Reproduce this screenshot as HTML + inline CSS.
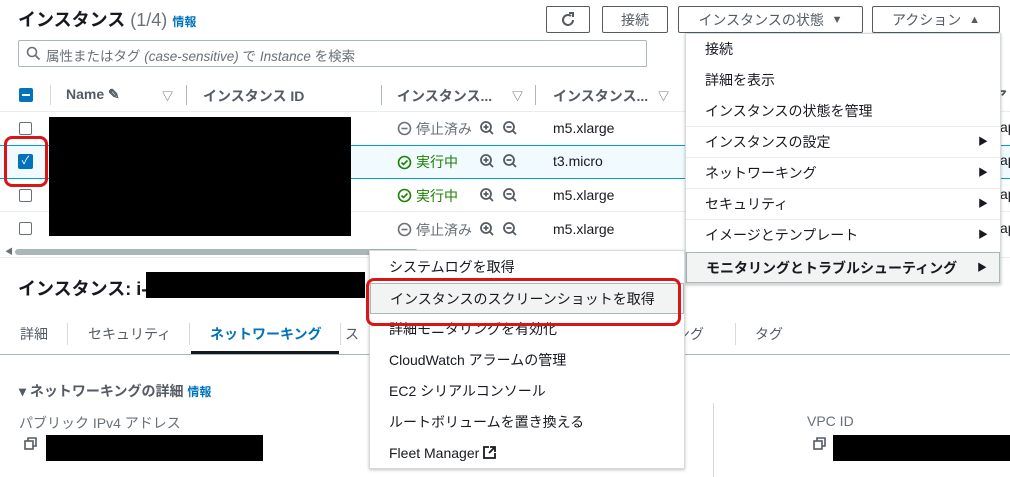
<!DOCTYPE html>
<html><head><meta charset="utf-8"><style>
*{box-sizing:border-box;margin:0;padding:0}
body{width:1010px;height:477px;overflow:hidden;background:#fff;font-family:"Liberation Sans","Noto Sans CJK JP",sans-serif;font-size:14px;color:#16191f;position:relative}
.a{position:absolute;white-space:nowrap}
.btn{position:absolute;border:1px solid #545b64;border-radius:2px;background:#fff;font-size:14px;color:#545b64;display:flex;align-items:center;justify-content:center;top:6px;height:27px}
.cb{position:absolute;width:13px;height:13px;border:1px solid #687078;border-radius:2px;background:#fff}
.sep{position:absolute;width:1px;background:#d5dbdb}
.menu{position:absolute;background:#fff;border:1px solid #d5dbdb;box-shadow:0 1px 3px rgba(0,0,0,.25)}
.mi{position:absolute;left:0;right:0;height:31px;padding-left:19px;line-height:31px;color:#16191f;font-size:14px}
.tri{position:absolute;right:12px;top:0;font-size:10px;color:#16191f}
.stop{color:#687078}.run{color:#1d8102}
.blk{position:absolute;background:#000}
.red{position:absolute;border:3px solid #d91515;border-radius:8px}
.ic{position:absolute}
</style></head><body>
<div class="a" style="left:18px;top:6px;font-size:18px;font-weight:bold">インスタンス <span style="font-weight:normal;color:#687078">(1/4)</span> <span style="font-size:12px;color:#0073bb;font-weight:bold">情報</span></div>
<div class="btn" style="left:546px;width:44px"><svg width="16" height="16" viewBox="0 0 16 16"><path d="M13 8a5 5 0 1 1-2-4" fill="none" stroke="#545b64" stroke-width="2"/><path d="M9 1h4v4" fill="none" stroke="#545b64" stroke-width="2"/></svg></div>
<div class="btn" style="left:602px;width:66px">接続</div>
<div class="btn" style="left:678px;width:185px">インスタンスの状態 &nbsp;<span style="font-size:11px">▼</span></div>
<div class="btn" style="left:872px;width:128px">アクション &nbsp;<span style="font-size:11px">▲</span></div>
<div class="a" style="left:18px;top:40px;width:629px;height:27px;border:1px solid #aab7b8;border-radius:2px"></div>
<svg class="a" style="left:26px;top:46px" width="15" height="15" viewBox="0 0 15 15"><circle cx="6" cy="6" r="4.5" fill="none" stroke="#687078" stroke-width="1.6"/><path d="M9.5 9.5l4 4" stroke="#687078" stroke-width="1.8"/></svg>
<div class="a" style="left:46px;top:45px;color:#687078;font-size:13.5px">属性またはタグ <i>(case-sensitive)</i> で <i>Instance</i> を検索</div>
<div class="a" style="left:0;top:79px;width:1010px;height:33px;border-bottom:1px solid #eaeded"></div>
<div class="a" style="left:19px;top:88px;width:14px;height:14px;background:#0073bb;border-radius:2px"><div style="position:absolute;left:3px;top:6px;width:8px;height:2px;background:#fff"></div></div>
<div class="sep" style="left:50px;top:85px;height:20px"></div>
<div class="a" style="left:66px;top:86px;font-weight:bold;color:#545b64">Name ✎</div>
<div class="a" style="left:162px;top:88px;font-size:11px;color:#545b64">▽</div>
<div class="sep" style="left:186px;top:85px;height:20px;background:#aab7b8"></div>
<div class="a" style="left:203px;top:86px;font-weight:bold;color:#545b64">インスタンス ID</div>
<div class="sep" style="left:381px;top:85px;height:20px;background:#aab7b8"></div>
<div class="a" style="left:397px;top:86px;font-weight:bold;color:#545b64">インスタンス...</div>
<div class="a" style="left:512px;top:88px;font-size:11px;color:#545b64">▽</div>
<div class="sep" style="left:535px;top:85px;height:20px;background:#aab7b8"></div>
<div class="a" style="left:553px;top:86px;font-weight:bold;color:#545b64">インスタンス...</div>
<div class="a" style="left:658px;top:88px;font-size:11px;color:#545b64">▽</div>
<div class="a" style="left:993px;top:86px;font-weight:bold;color:#545b64">ア</div>
<!-- rows -->
<div class="a" style="left:0;top:145px;width:1010px;height:34px;background:#f1faff;border-top:1px solid #00a1c9;border-bottom:1px solid #00a1c9"></div>
<div class="a" style="left:0;top:211px;width:1010px;height:1px;background:#eaeded"></div>
<div class="cb" style="left:19px;top:122px"></div>
<div class="a" style="left:18px;top:154px;width:15px;height:15px;background:#0073bb;border-radius:2px;color:#fff;font-size:11px;text-align:center;line-height:15px">✓</div>
<div class="cb" style="left:19px;top:189px"></div>
<div class="cb" style="left:19px;top:222px"></div>

<svg class="ic" style="left:397px;top:121px" width="15" height="15" viewBox="0 0 15 15"><circle cx="7.5" cy="7.5" r="6" fill="none" stroke="#687078" stroke-width="1.6"/><path d="M4.5 7.5h6" stroke="#687078" stroke-width="1.6"/></svg>
<svg class="ic" style="left:397px;top:155px" width="15" height="15" viewBox="0 0 15 15"><circle cx="7.5" cy="7.5" r="6" fill="none" stroke="#1d8102" stroke-width="1.6"/><path d="M4.5 7.5l2 2 4-4" fill="none" stroke="#1d8102" stroke-width="1.6"/></svg>
<svg class="ic" style="left:397px;top:188px" width="15" height="15" viewBox="0 0 15 15"><circle cx="7.5" cy="7.5" r="6" fill="none" stroke="#1d8102" stroke-width="1.6"/><path d="M4.5 7.5l2 2 4-4" fill="none" stroke="#1d8102" stroke-width="1.6"/></svg>
<svg class="ic" style="left:397px;top:222px" width="15" height="15" viewBox="0 0 15 15"><circle cx="7.5" cy="7.5" r="6" fill="none" stroke="#687078" stroke-width="1.6"/><path d="M4.5 7.5h6" stroke="#687078" stroke-width="1.6"/></svg>
<div class="a stop" style="left:416px;top:119px">停止済み</div>
<div class="a run" style="left:416px;top:152px">実行中</div>
<div class="a run" style="left:416px;top:186px">実行中</div>
<div class="a stop" style="left:416px;top:220px">停止済み</div>
<svg class="ic" style="left:479px;top:120px" width="40" height="16" viewBox="0 0 40 16"><g fill="none" stroke="#545b64" stroke-width="1.8"><circle cx="7" cy="7" r="5"/><path d="M10.5 10.5l3.5 3.5M4.5 7h5M7 4.5v5"/><circle cx="30" cy="7" r="5"/><path d="M33.5 10.5l3.5 3.5M27.5 7h5"/></g></svg>
<svg class="ic" style="left:479px;top:153px" width="40" height="16" viewBox="0 0 40 16"><g fill="none" stroke="#545b64" stroke-width="1.8"><circle cx="7" cy="7" r="5"/><path d="M10.5 10.5l3.5 3.5M4.5 7h5M7 4.5v5"/><circle cx="30" cy="7" r="5"/><path d="M33.5 10.5l3.5 3.5M27.5 7h5"/></g></svg>
<svg class="ic" style="left:479px;top:187px" width="40" height="16" viewBox="0 0 40 16"><g fill="none" stroke="#545b64" stroke-width="1.8"><circle cx="7" cy="7" r="5"/><path d="M10.5 10.5l3.5 3.5M4.5 7h5M7 4.5v5"/><circle cx="30" cy="7" r="5"/><path d="M33.5 10.5l3.5 3.5M27.5 7h5"/></g></svg>
<svg class="ic" style="left:479px;top:221px" width="40" height="16" viewBox="0 0 40 16"><g fill="none" stroke="#545b64" stroke-width="1.8"><circle cx="7" cy="7" r="5"/><path d="M10.5 10.5l3.5 3.5M4.5 7h5M7 4.5v5"/><circle cx="30" cy="7" r="5"/><path d="M33.5 10.5l3.5 3.5M27.5 7h5"/></g></svg>
<div class="a" style="left:553px;top:120px">m5.xlarge</div>
<div class="a" style="left:553px;top:153px">t3.micro</div>
<div class="a" style="left:553px;top:187px">m5.xlarge</div>
<div class="a" style="left:553px;top:221px">m5.xlarge</div>
<div class="a" style="left:1000px;top:119px">ap</div><div class="a" style="left:1000px;top:152px">ap</div><div class="a" style="left:1000px;top:186px">ap</div><div class="a" style="left:1000px;top:220px">ap</div>
<div class="blk" style="left:49px;top:117px;width:302px;height:119px"></div>
<div class="a" style="left:5px;top:246px;font-size:8px;color:#687078">◀</div>
<div class="a" style="left:15px;top:249px;width:403px;height:6px;background:#aab7b8;border-radius:3px"></div>
<div class="a" style="left:0;top:257px;width:1010px;height:1px;background:#eaeded"></div>
<!-- bottom panel -->
<div class="a" style="left:18px;top:275px;font-size:18px;font-weight:bold">インスタンス: i-</div>
<div class="blk" style="left:146px;top:272px;width:219px;height:26px"></div>
<div class="a" style="left:20px;top:324px;color:#545b64">詳細</div>
<div class="sep" style="left:67px;top:323px;height:22px"></div>
<div class="a" style="left:88px;top:324px;color:#545b64">セキュリティ</div>
<div class="sep" style="left:189px;top:323px;height:22px"></div>
<div class="a" style="left:210px;top:324px;color:#0073bb;font-weight:bold">ネットワーキング</div>
<div class="a" style="left:191px;top:351px;width:148px;height:3px;background:#16191f"></div>
<div class="sep" style="left:340px;top:323px;height:22px"></div>
<div class="a" style="left:345px;top:324px;color:#545b64">ス</div>
<div class="a" style="left:676px;top:324px;color:#545b64">ング</div>
<div class="sep" style="left:735px;top:323px;height:22px"></div>
<div class="a" style="left:755px;top:324px;color:#545b64">タグ</div>
<div class="a" style="left:0;top:354px;width:1010px;height:1px;background:#aab7b8"></div>
<div class="a" style="left:19px;top:381px;font-weight:bold;color:#545b64">▾ ネットワーキングの詳細 <span style="color:#0073bb;font-size:12px">情報</span></div>
<div class="a" style="left:19px;top:413px;color:#687078">パブリック IPv4 アドレス</div>
<svg class="ic" style="left:24px;top:437px" width="13" height="13" viewBox="0 0 13 13"><g fill="none" stroke="#545b64" stroke-width="1.6"><rect x="1" y="4" width="8" height="8"/><path d="M4 4V1h8v8H9"/></g></svg>
<div class="blk" style="left:46px;top:435px;width:217px;height:26px"></div>
<div class="sep" style="left:713px;top:403px;height:74px"></div>
<div class="a" style="left:807px;top:413px;color:#687078">VPC ID</div>
<svg class="ic" style="left:813px;top:437px" width="13" height="13" viewBox="0 0 13 13"><g fill="none" stroke="#545b64" stroke-width="1.6"><rect x="1" y="4" width="8" height="8"/><path d="M4 4V1h8v8H9"/></g></svg>
<div class="blk" style="left:833px;top:435px;width:177px;height:26px"></div>
<!-- action menu -->
<div class="menu" style="left:685px;top:33px;width:316px;height:251px">
<div class="mi" style="top:0">接続</div>
<div class="mi" style="top:31px">詳細を表示</div>
<div class="mi" style="top:62px;border-bottom:1px solid #eaeded">インスタンスの状態を管理</div>
<div class="mi" style="top:93px;border-bottom:1px solid #eaeded">インスタンスの設定<span class="tri">▶</span></div>
<div class="mi" style="top:124px;border-bottom:1px solid #eaeded">ネットワーキング<span class="tri">▶</span></div>
<div class="mi" style="top:155px;border-bottom:1px solid #eaeded">セキュリティ<span class="tri">▶</span></div>
<div class="mi" style="top:186px">イメージとテンプレート<span class="tri">▶</span></div>
<div class="mi" style="top:218px;background:#f2f3f3;border:1px solid #aab7b8;font-weight:bold">モニタリングとトラブルシューティング<span class="tri">▶</span></div>
</div>
<!-- submenu -->
<div class="menu" style="left:369px;top:250px;width:316px;height:219px">
<div class="mi" style="top:1px">システムログを取得</div>
<div class="mi" style="top:32px;background:#f2f3f3;border:1px solid #aab7b8">インスタンスのスクリーンショットを取得</div>
<div class="mi" style="top:63px">詳細モニタリングを有効化</div>
<div class="mi" style="top:94px">CloudWatch アラームの管理</div>
<div class="mi" style="top:125px">EC2 シリアルコンソール</div>
<div class="mi" style="top:156px">ルートボリュームを置き換える</div>
<div class="mi" style="top:187px">Fleet Manager <svg width="13" height="13" viewBox="0 0 13 13" style="vertical-align:-1px"><g fill="none" stroke="#16191f" stroke-width="1.8"><path d="M6 1H1v11h11V7"/><path d="M7 1h5v5M12 1L6 7"/></g></svg></div>
</div>
<div class="red" style="left:4px;top:136px;width:44px;height:51px"></div>
<div class="red" style="left:366px;top:278px;width:315px;height:48px"></div>
</body></html>
